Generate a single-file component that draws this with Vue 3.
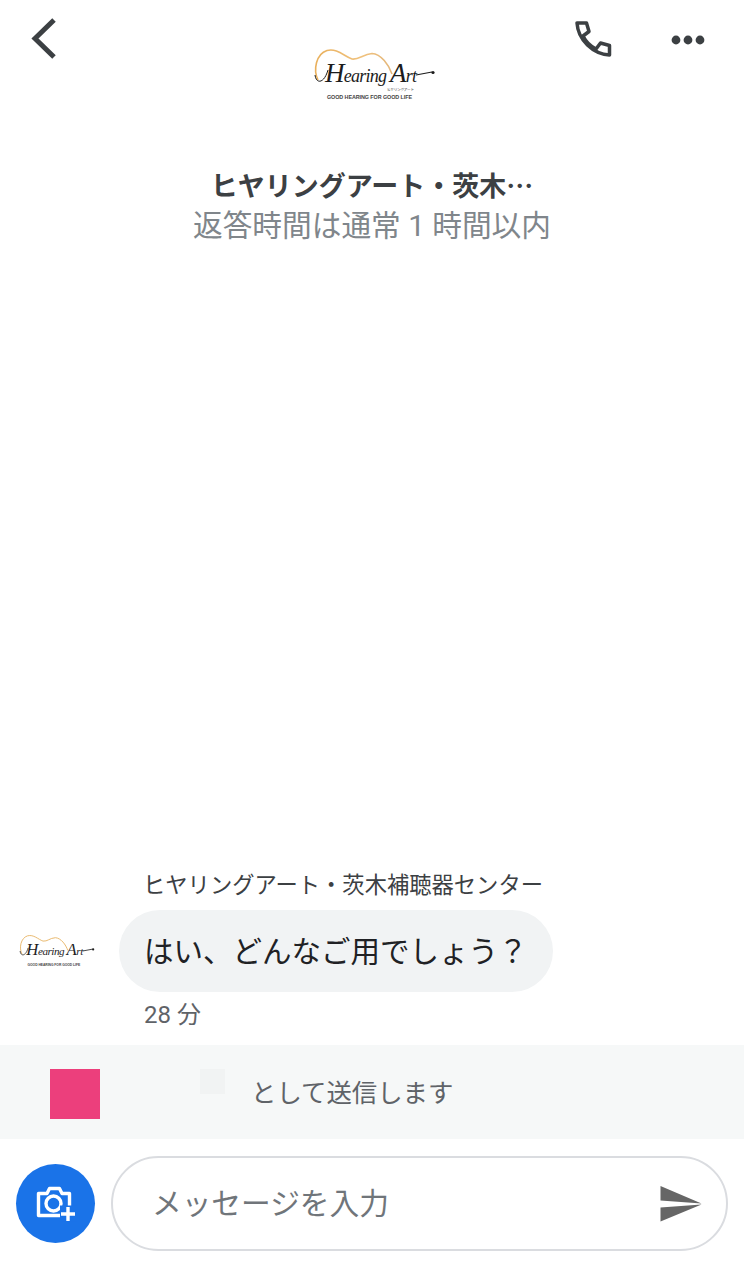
<script setup>
const senderName = 'ヒヤリングアート・茨木補聴器センター'
const violinCurve = 'M8 32C3 22 6 6 17 2.5C27 0 34 8 42 11C49 12 53 6 62 5.5C71 6 79 17 82 26'
</script>

<template>
  <div class="page">
    <header class="top-bar">
      <button class="icon-btn back-btn" aria-label="back">
        <svg width="30" height="44" viewBox="0 0 30 44">
          <path d="M25 3 6 21.5 25 40" fill="none" stroke="#3c4043" stroke-width="5" />
        </svg>
      </button>
      <svg class="logo" width="126" height="54" viewBox="0 0 126 54">
        <defs>
          <linearGradient id="violin" x1="0" y1="0" x2="1" y2="0">
            <stop offset="0" stop-color="#e9b05c" />
            <stop offset="0.6" stop-color="#f0c27e" />
            <stop offset="1" stop-color="#e3b67a" />
          </linearGradient>
        </defs>
        <path :d="violinCurve" fill="none" stroke="url(#violin)" stroke-width="1.6" />
        <path d="M5 27C6 36 14 36 18 22" fill="none" stroke="#1c1c1c" stroke-width="1" />
        <text x="15" y="34" class="logo-script" textLength="92"><tspan class="logo-cap">H</tspan>earing <tspan class="logo-cap">A</tspan>rt</text>
        <path d="M106 27 122 24" fill="none" stroke="#1c1c1c" stroke-width="1.1" />
        <circle cx="123" cy="24.5" r="1.6" fill="#1c1c1c" />
        <text x="77" y="42.5" class="logo-kana" textLength="27">ヒヤリングアート</text>
        <text x="17" y="50.5" class="logo-tag" textLength="85">GOOD HEARING FOR GOOD LIFE</text>
      </svg>
      <div class="actions">
        <button class="icon-btn" aria-label="call">
          <svg width="37" height="37" viewBox="0 0 37 37">
            <path d="M2 2h9.5l2.5 8.5-6 4.5c3 6 7 10 13 13l4.5-6 9 2.5V34C18 33 3 19 2 2z" fill="none" stroke="#3c4043" stroke-width="3.5" stroke-linejoin="round" />
          </svg>
        </button>
        <button class="icon-btn" aria-label="more">
          <svg width="34" height="10" viewBox="0 0 34 10">
            <circle cx="5" cy="5" r="4.4" fill="#3c4043" />
            <circle cx="17" cy="5" r="4.4" fill="#3c4043" />
            <circle cx="29" cy="5" r="4.4" fill="#3c4043" />
          </svg>
        </button>
      </div>
    </header>

    <div class="heading">
      <h1 class="title">ヒヤリングアート・茨木…</h1>
      <p class="subtitle">返答時間は通常 1 時間以内</p>
    </div>

    <main class="thread">
      <div class="sender">{{ senderName }}</div>
      <div class="message">
        <svg class="avatar" width="78" height="34" viewBox="0 0 126 54">
          <path :d="violinCurve" fill="none" stroke="#e9b96f" stroke-width="1.6" />
          <path d="M5 27C6 36 14 36 18 22" fill="none" stroke="#1c1c1c" stroke-width="1.2" />
          <text x="15" y="34" class="logo-script" textLength="92"><tspan class="logo-cap">H</tspan>earing <tspan class="logo-cap">A</tspan>rt</text>
          <path d="M106 27 122 24" fill="none" stroke="#1c1c1c" stroke-width="1.3" />
          <circle cx="123" cy="24.5" r="1.8" fill="#1c1c1c" />
          <text x="17" y="50.5" class="logo-tag" textLength="85">GOOD HEARING FOR GOOD LIFE</text>
        </svg>
        <div class="bubble">はい、どんなご用でしょう？</div>
      </div>
      <div class="time">28 分</div>
    </main>

    <div class="notice">
      <span class="swatch"></span>
      <span class="swatch-faint"></span>
      <span class="notice-text">として送信します</span>
    </div>

    <footer class="composer">
      <button class="camera" aria-label="add photo">
        <svg width="79" height="79" viewBox="0 0 79 79">
          <path d="M22.5 29.5H31l2.5-5h10l2.5 5h7.5v22h-31z" fill="none" stroke="#fff" stroke-width="3.4" stroke-linejoin="round" />
          <circle cx="37.5" cy="39.5" r="7.5" fill="none" stroke="#fff" stroke-width="3.4" />
          <rect x="44" y="41.5" width="17" height="16" fill="#1a73e8" />
          <path d="M52 43v14M45 50h14" stroke="#fff" stroke-width="3.4" />
        </svg>
      </button>
      <div class="field">
        <input class="field-input" type="text" placeholder="メッセージを入力" />
        <svg class="send" width="42" height="36" viewBox="0 0 42 36">
          <path d="M0.5 0 41.5 17.5 0.5 14.5zM0.5 35.5 41.5 18.5 0.5 21.5z" fill="#666" />
        </svg>
      </div>
    </footer>
  </div>
</template>

<style scoped>
.page {
  width: 744px;
  height: 1266px;
  display: flex;
  flex-direction: column;
  background: #fff;
  color: #3c4043;
  font-family: Roboto, "Noto Sans CJK JP", "Liberation Sans", sans-serif;
  overflow: hidden;
}

.icon-btn {
  padding: 0;
  border: none;
  background: none;
  display: flex;
  align-items: center;
  justify-content: center;
}

.top-bar {
  display: grid;
  grid-template-columns: 1fr 126px 1fr;
  height: 102px;
  padding-right: 39px;
  box-sizing: border-box;
}

.back-btn {
  justify-self: start;
  align-self: start;
  margin: 17px 0 0 29px;
}

.logo {
  margin-top: 48px;
  margin-left: 20.5px;
}

.logo-script {
  font-family: "Liberation Serif", serif;
  font-style: italic;
  font-size: 18px;
  fill: #1c1c1c;
}

.logo-cap {
  font-size: 27px;
}

.logo-kana {
  font-family: "Noto Sans CJK JP", sans-serif;
  font-size: 3.6px;
  fill: #333;
}

.logo-tag {
  font-family: "Liberation Sans", sans-serif;
  font-size: 5.4px;
  font-weight: 700;
  fill: #444;
}

.actions {
  display: flex;
  justify-content: flex-end;
  align-items: center;
  gap: 59px;
  height: 37px;
  margin-top: 21px;
}

.heading {
  margin-top: 63px;
  text-align: center;
}

.title {
  margin: 0;
  font-family: "Noto Sans CJK JP", sans-serif;
  font-size: 27px;
  line-height: 40px;
  font-weight: 700;
  color: #3c4043;
}

.subtitle {
  margin: 1px 0 0;
  font-size: 29.7px;
  line-height: 40px;
  color: #80868b;
}

.thread {
  margin-top: auto;
}

.sender {
  margin: 0 0 11px 143px;
  font-size: 22.3px;
  line-height: 28px;
  color: #3c4043;
}

.message {
  display: flex;
  align-items: center;
  padding-left: 17px;
  gap: 24px;
}

.bubble {
  height: 82px;
  padding: 0 25px 4px;
  box-sizing: border-box;
  display: flex;
  align-items: center;
  border-radius: 41px;
  background: #f1f3f4;
  font-size: 29.5px;
  color: #202124;
}

.time {
  margin: 8px 0 15px 144px;
  font-size: 24px;
  line-height: 30px;
  color: #5f6368;
}

.notice {
  height: 94px;
  box-sizing: border-box;
  display: flex;
  align-items: flex-start;
  padding: 24px 0 0 50px;
  background: #f6f8f8;
}

.swatch {
  width: 50px;
  height: 50px;
  background: #ec3f7c;
}

.swatch-faint {
  width: 25px;
  height: 25px;
  margin-left: 100px;
  background: #f1f3f3;
}

.notice-text {
  margin-left: 26px;
  font-size: 25.4px;
  line-height: 48px;
  color: #5f6368;
}

.composer {
  display: flex;
  align-items: center;
  gap: 16px;
  padding: 17px 16px 15px;
}

.camera {
  width: 79px;
  height: 79px;
  flex: none;
  padding: 0;
  border: none;
  border-radius: 50%;
  background: #1a73e8;
}

.camera svg {
  display: block;
}

.field {
  flex: 1;
  height: 95px;
  box-sizing: border-box;
  display: flex;
  align-items: center;
  padding: 0 24px 0 39px;
  border: 2px solid #dadce0;
  border-radius: 48px;
}

.field-input {
  flex: 1;
  min-width: 0;
  border: none;
  outline: none;
  padding: 0;
  background: none;
  font: inherit;
  font-size: 29.7px;
  color: #3c4043;
}

.field-input::placeholder {
  color: #70757a;
  opacity: 1;
}

.send {
  flex: none;
}
</style>
